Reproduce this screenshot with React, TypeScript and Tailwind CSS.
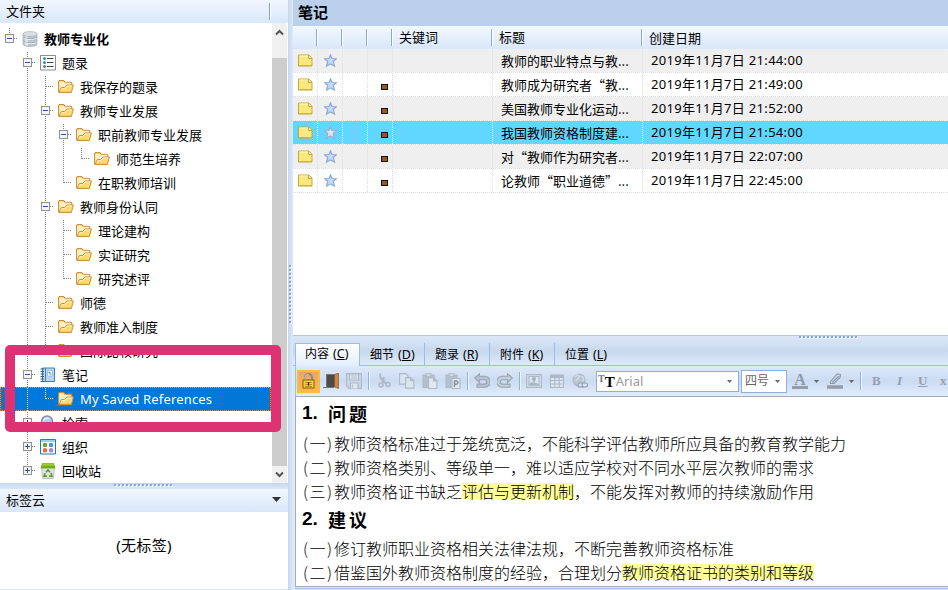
import type { ReactNode } from "react";
import clsx from "clsx";

type IconName = "db" | "list" | "folder" | "notebook" | "search" | "org" | "trash";

// v: vertical line, t: tee, l: last child, - / +: toggle with siblings below,
// r: root toggle, E: collapsed toggle on the last sibling
type Guide = " " | "v" | "t" | "l" | "-" | "+" | "r" | "E";

interface TreeNode {
  guides: string;
  icon: IconName;
  label: string;
  bold?: boolean;
  selected?: boolean;
}

const tree: TreeNode[] = [
  { guides: "r", icon: "db", label: "教师专业化", bold: true },
  { guides: " -", icon: "list", label: "题录" },
  { guides: " vt", icon: "folder", label: "我保存的题录" },
  { guides: " v-", icon: "folder", label: "教师专业发展" },
  { guides: " vv-", icon: "folder", label: "职前教师专业发展" },
  { guides: " vvvl", icon: "folder", label: "师范生培养" },
  { guides: " vvl", icon: "folder", label: "在职教师培训" },
  { guides: " v-", icon: "folder", label: "教师身份认同" },
  { guides: " vvt", icon: "folder", label: "理论建构" },
  { guides: " vvt", icon: "folder", label: "实证研究" },
  { guides: " vvl", icon: "folder", label: "研究述评" },
  { guides: " vt", icon: "folder", label: "师德" },
  { guides: " vt", icon: "folder", label: "教师准入制度" },
  { guides: " vl", icon: "folder", label: "国际比较研究" },
  { guides: " -", icon: "notebook", label: "笔记" },
  { guides: " vl", icon: "folder", label: "My Saved References", selected: true },
  { guides: " +", icon: "search", label: "检索" },
  { guides: " +", icon: "org", label: "组织" },
  { guides: " E", icon: "trash", label: "回收站" },
];

const notes = [
  { title: "教师的职业特点与教...", date: "2019年11月7日 21:44:00", mark: false },
  { title: "教师成为研究者“教...", date: "2019年11月7日 21:49:00", mark: true },
  { title: "美国教师专业化运动...", date: "2019年11月7日 21:52:00", mark: true },
  { title: "我国教师资格制度建...", date: "2019年11月7日 21:54:00", mark: true, selected: true },
  { title: "对“教师作为研究者...", date: "2019年11月7日 22:07:00", mark: true },
  { title: "论教师“职业道德”...", date: "2019年11月7日 22:45:00", mark: true },
];

const tabs = [
  { label: "细节", hotkey: "D" },
  { label: "题录", hotkey: "R" },
  { label: "附件", hotkey: "K" },
  { label: "位置", hotkey: "L" },
];

const GuideCell = ({ kind, selected }: { kind: Guide; selected?: boolean }) => {
  const color = selected ? "#ffffff" : "#808080";
  const box = "-+rE".includes(kind);
  const plus = kind === "+" || kind === "E";
  const down = "vt-+".includes(kind);
  return (
    <svg width="18" height="24" className="shrink-0" shapeRendering="crispEdges">
      {kind !== " " && (
        <path
          d={clsx("M9.5 1V12", down && "M9.5 13V24", kind !== "v" && "M9.5 11.5H18")}
          stroke={color}
          strokeDasharray="1 1"
          fill="none"
        />
      )}
      {box && (
        <>
          <rect x="5.5" y="7.5" width="8" height="8" fill="#f4f4f4" stroke="#919191" />
          <path d={plus ? "M7 11.5H12M9.5 9V14" : "M7 11.5H12"} stroke="#2f4fa5" />
        </>
      )}
    </svg>
  );
};

const TreeIcon = ({ name }: { name: IconName }) => {
  switch (name) {
    case "db":
      return (
        <svg width="16" height="16" viewBox="0 0 16 16" className="shrink-0">
          <path d="M1 3v10.2c0 3 14 3 14 0V3z" fill="#bcc4cc" />
          <path d="M3 4v10.800c1 .3 2 .5 3 .6V5z" fill="#e0e5e9" />
          <path d="M1 6.700c1 2.200 13 2.200 14 0M1 11c1 2.200 13 2.200 14 0" stroke="#eef1f3" fill="none" />
          <path d="M1 5.800c1 2.200 13 2.200 14 0M1 10c1 2.200 13 2.200 14 0" stroke="#a2acb5" strokeWidth=".8" fill="none" />
          <path d="M1 3v10.200c0 3 14 3 14 0V3" stroke="#a3adb6" strokeWidth=".7" fill="none" />
          <ellipse cx="8" cy="3" rx="7" ry="2.500" fill="#d9dfe4" stroke="#a3adb6" strokeWidth=".6" />
        </svg>
      );
    case "list":
      return (
        <svg width="16" height="16" viewBox="0 0 16 16" className="shrink-0">
          <path d="M.5.500h15v14.500h-15z" fill="#fff" stroke="#8d8d8d" />
          <path d="M7 3.500h6.500M7 7.500h6.500M7 11.500h6.500" stroke="#444" />
          <circle cx="4.500" cy="3.500" r="1.500" fill="#2793c8" />
          <circle cx="4.500" cy="7.500" r="1.500" fill="#2793c8" />
          <circle cx="4.500" cy="11.500" r="1.500" fill="#2793c8" />
        </svg>
      );
    case "folder":
      return (
        <svg width="16" height="14" viewBox="0 0 16 14" className="shrink-0">
          <path d="M.6 12V1.500L1.500.600h4.200l1.300 1.600h6l.8.900V6l-1 6.500H1.500z" fill="#fdf0c0" stroke="#cf9138" strokeWidth="1.100" />
          <path d="M1.200 12.300 3.300 7.500h3.200L8.800 5h6.600l-2 7.300z" fill="#fbd977" stroke="#cf9138" strokeWidth="1" />
          <path d="M3 11 4.200 8.500H7L9.200 6h4.900" stroke="#fff3c8" fill="none" />
        </svg>
      );
    case "notebook":
      return (
        <svg width="16" height="16" viewBox="0 0 16 16" className="shrink-0">
          <path d="M2.500 1h12v13.500h-12z" fill="#b9d6ee" stroke="#4480ae" />
          <path d="M5.500 1v13.500" stroke="#4480ae" />
          <path d="M7.500 3.500h5v5.500h-5z" fill="#f4f8fc" stroke="#8eb3d2" strokeWidth=".7" />
          <path d="M8.500 5.500h2M9.500 7h2" stroke="#4480ae" />
          <path d="M.5 2H4M.5 4.500H4M.5 7H4M.5 9.500H4M.5 12H4M.5 14.500H4" stroke="#355f82" />
        </svg>
      );
    case "search":
      return (
        <svg width="16" height="16" viewBox="0 0 16 16" className="shrink-0">
          <circle cx="7" cy="6.500" r="5.500" fill="#a4d0f5" stroke="#8794a5" strokeWidth="1.500" />
          <path d="M3.500 6a4 4 0 0 1 6-2" stroke="#e8f5ff" strokeWidth="1.500" fill="none" />
          <path d="m11 11 4 4" stroke="#8794a5" strokeWidth="2.500" />
        </svg>
      );
    case "org":
      return (
        <svg width="16" height="16" viewBox="0 0 16 16" className="shrink-0">
          <path d="M.5.500h15v14.500h-15z" fill="#f3f9fd" stroke="#207ca6" />
          <path d="M1 2h14" stroke="#7cc4e6" strokeWidth="1.500" />
          <rect x="3" y="4" width="4" height="4" rx="1" fill="#7c9e1f" />
          <rect x="9" y="4" width="4" height="4" rx="1" fill="#4f93d0" />
          <rect x="3" y="9.300" width="4" height="4" rx="1" fill="#e86c3a" />
          <rect x="9" y="9.300" width="4" height="4" rx="1" fill="#a982d8" />
        </svg>
      );
    case "trash":
      return (
        <svg width="16" height="16" viewBox="0 0 16 16" className="shrink-0">
          <path d="M1.500 5h13l-1.200 10.500H2.700z" fill="#dfe1df" stroke="#a5aaa5" strokeWidth=".7" />
          <path d="M2 .3h12l1.500 4.900H.5z" fill="#6dad17" />
          <path d="M2.500.800h11l.7 2H1.800z" fill="#97cc35" />
          <path d="m6 9.300 2-2.500 2 2.500M11 10l1 3.300H9M7 13.300H4l1.200-3" stroke="#4c9a1e" strokeWidth="1.400" fill="none" />
        </svg>
      );
  }
};

const TreeRow = ({ node }: { node: TreeNode }) => (
  <div
    className={clsx(
      "flex h-6 items-center",
      node.selected && "bg-[#0078d7] text-white outline-1 -outline-offset-1 outline-dotted outline-[#ff8728]"
    )}
  >
    {node.guides.split("").map((g, i) => (
      <GuideCell key={i} kind={g as Guide} selected={node.selected} />
    ))}
    <span className="ml-1 mr-1.5 flex">
      <TreeIcon name={node.icon} />
    </span>
    <span
      className={clsx(
        "whitespace-nowrap pt-px",
        node.bold && "font-bold",
        node.selected && "tracking-[0.17px]"
      )}
    >
      {node.label}
    </span>
  </div>
);

// Row of small two-tone grips drawn on the splitters
const Grip = ({ vertical }: { vertical?: boolean }) => (
  <svg width={vertical ? 4 : 60} height={vertical ? 60 : 4} shapeRendering="crispEdges">
    {Array.from({ length: 15 }, (_, i) => (
      <g key={i} transform={vertical ? `translate(0 ${i * 4})` : `translate(${i * 4} 0)`}>
        <rect x="1" y="1" width="2" height="2" fill="#fff" />
        <rect width="2" height="2" fill="#86a8d6" />
      </g>
    ))}
  </svg>
);

const FolderPane = () => (
  <aside className="flex w-[288px] shrink-0 flex-col bg-white">
    <div className="flex h-[23px] shrink-0 items-center justify-between bg-linear-to-b from-[#f1f6fe] to-[#d9e7fa] pl-1.5 pr-[17px]">
      <span className="pt-px">文件夹</span>
      <span className="-mt-px h-[17px] border-l border-r border-l-[#7f9fce] border-r-white" />
    </div>
    <div className="flex h-[460px] shrink-0">
      <div className="w-[271px] pt-1">
        {tree.map((node) => (
          <TreeRow key={node.label} node={node} />
        ))}
      </div>
      <div className="ml-px flex w-[15px] flex-col bg-[#f0f0f0]">
        <div className="flex h-[35px] justify-center pt-1.5">
          <svg width="9" height="7" viewBox="0 0 9 7">
            <path d="M1 5.500 4.500 2 8 5.500" stroke="#555" strokeWidth="2" fill="none" />
          </svg>
        </div>
        <div className="flex-1 bg-[#cdcdcd]" />
        <div className="flex h-[17px] items-center justify-center">
          <svg width="9" height="7" viewBox="0 0 9 7">
            <path d="M1 1.500 4.500 5 8 1.500" stroke="#555" strokeWidth="2" fill="none" />
          </svg>
        </div>
      </div>
    </div>
    <div className="flex h-1.5 shrink-0 justify-center bg-linear-to-b from-[#c5d8ef] to-[#dae7f8] pt-px">
      <Grip />
    </div>
    <div className="flex h-[23px] shrink-0 items-center justify-between bg-linear-to-b from-[#f1f6fe] to-[#d9e7fa] pl-1.5 pr-[7px]">
      <span className="pt-px">标签云</span>
      <svg width="9" height="5" className="-mt-0.5">
        <path d="M0 0h9L4.500 5z" fill="#333" />
      </svg>
    </div>
    <div className="flex flex-1 justify-center border-b border-[#d5e4f7] pt-[22px] text-[15px] tracking-[0.3px]">
      (无标签)
    </div>
  </aside>
);

const NoteIcon = () => (
  <svg width="15" height="13" viewBox="0 0 15 13">
    <path d="M.5 1h10.500l3 3v8H.5z" fill="#fae981" stroke="#c4aa35" />
    <path d="M1.500 2h9" stroke="#fff5b0" />
    <path d="M10.500 1v3.500H14" fill="#fff7c0" stroke="#b59a2c" strokeWidth=".8" />
    <path d="M1 11.500h13" stroke="#c9b343" />
  </svg>
);

const StarIcon = ({ selected }: { selected?: boolean }) => (
  <svg width="13" height="13" viewBox="0 0 13 13">
    <path
      d="m6.500.800 1.500 3.700 4.300.3-3.200 2.700 1.400 4.600-4-2.300-4 2.300 1.400-4.600L.7 4.800 5 4.500z"
      fill={selected ? "#dfe5f3" : "#c4dcf7"}
      stroke={selected ? "#a5a9c4" : "#86a6d6"}
      strokeWidth="1.100"
    />
  </svg>
);

const HeadCell = ({ className, children }: { className: string; children?: ReactNode }) => (
  <div className={clsx("flex h-[23px] shrink-0 items-center", className)}>
    <span className="flex-1 pt-px">{children}</span>
    <span className="h-[17px] border-l border-r border-l-[#8aa9d6] border-r-white" />
  </div>
);

const cell = "flex h-full shrink-0 items-center border-r border-dotted";

const NoteList = () => (
  <section className="flex h-[335px] shrink-0 flex-col bg-white">
    <h2 className="h-[26px] shrink-0 bg-[#bad0eb] pl-[5px] text-[15px] font-bold leading-[25px]">笔记</h2>
    <div className="flex h-[23px] shrink-0 bg-linear-to-b from-[#f3f8ff] to-[#d9e7fa]">
      <HeadCell className="w-[25px]" />
      <HeadCell className="w-[25px]" />
      <HeadCell className="w-[25px]" />
      <HeadCell className="w-[25px]" />
      <HeadCell className="w-[100px] pl-1.5">关键词</HeadCell>
      <HeadCell className="w-[150px] pl-1.5">标题</HeadCell>
      <span className="pl-1.5 pt-px leading-[23px]">创建日期</span>
    </div>
    {notes.map((note, i) => {
      const border = note.selected ? "border-white" : "border-[#dedede]";
      return (
        <div
          key={note.date}
          className={clsx(
            "flex h-6 shrink-0 items-center border-b border-dotted border-[#dedede] bg-clip-padding",
            note.selected ? "bg-[#5fd7ff]" : i % 2 === 0 ? "bg-[#efefef]" : "bg-white"
          )}
        >
          <div className={clsx(cell, border, "w-[25px] pl-[5px]")}>
            <NoteIcon />
          </div>
          <div className={clsx(cell, border, "w-[25px] justify-center")}>
            <StarIcon selected={note.selected} />
          </div>
          <div className={clsx(cell, border, "w-[25px]")} />
          <div className={clsx(cell, border, "w-[25px] justify-end pr-1 pt-[5px]")}>
            {note.mark && <span className="h-1.5 w-[7px] border border-[#10103a] bg-[#9a5a0a]" />}
          </div>
          <div className={clsx(cell, border, "w-[100px]")} />
          <div
            lang="zh-CN"
            className={clsx(cell, border, "w-[150px] whitespace-nowrap pl-2 font-['Noto_Sans_CJK_SC',sans-serif]")}
          >
            {note.title}
          </div>
          <span className="whitespace-nowrap pl-2 pt-px tracking-[0.31px]">{note.date}</span>
        </div>
      );
    })}
  </section>
);

const Hotkey = ({ label, hotkey }: { label: string; hotkey: string }) => (
  <span className="whitespace-nowrap pt-px text-[12px]">
    {label}
    <span className="ml-1 text-[12.5px]">
      (<span className="underline">{hotkey}</span>)
    </span>
  </span>
);

const ToolIcon = ({ className, children }: { className?: string; children: ReactNode }) => (
  <svg
    width="16"
    height="16"
    viewBox="0 0 16 16"
    fill="none"
    stroke="#adb9c8"
    strokeWidth="1.1"
    className={clsx("shrink-0", className)}
  >
    {children}
  </svg>
);

const Separator = ({ className }: { className?: string }) => (
  <span className={clsx("h-[18px] shrink-0 border-l border-r border-l-[#8fb0df] border-r-[#eef5fe]", className)} />
);

const Caret = ({ className }: { className?: string }) => (
  <svg width="5" height="3" className={clsx("shrink-0", className)}>
    <path d="M0 0h5L2.500 3z" fill="#666" />
  </svg>
);

const Toolbar = () => (
  <div className="flex h-[30px] shrink-0 items-center overflow-hidden border-l border-[#9cbdea] bg-linear-to-b from-[#dce9fa] via-[#cbdbf0] to-[#e0edfd] pl-px">
    <span className="flex size-[23px] shrink-0 items-center justify-center border-2 border-[#f5be3c] bg-linear-to-b from-[#e9a36b] to-[#ffb84a]">
      <svg width="13" height="16" viewBox="0 0 13 16">
        <path d="M3 8V4.500a3.500 3.500 0 0 1 7 0V8" stroke="#8f8980" strokeWidth="2" fill="none" />
        <path d="M3 7V4.500a3.500 3.500 0 0 1 3.500-3" stroke="#f3eee6" strokeWidth=".7" fill="none" />
        <rect x="1" y="7" width="11" height="8" fill="#f8cf3c" stroke="#8a5d10" />
        <path d="M3 9.500h7M3 11.500h7M3 13.500h7" stroke="#9d7616" strokeWidth=".7" />
        <path d="M6.500 9v3.500" stroke="#503500" strokeWidth="1.500" />
      </svg>
    </span>
    <svg width="17" height="16" viewBox="0 0 17 16" className="ml-[3px] shrink-0">
      <path d="M3 1h9v13H3z" fill="#4b4b4b" />
      <path d="M3 1.500h9M3.500 1v13" stroke="#777" />
      <path d="M0 14.500h11" stroke="#6d7580" />
      <path d="M11.500 1.500 15.500 0v15.500l-4-1.500z" fill="#c78746" stroke="#8a5620" strokeWidth=".7" />
    </svg>
    <ToolIcon className="ml-[6px]">
      <path d="M.6.600h14.800v14.800H3L.6 13z" fill="#cbd6e3" />
      <path d="M3.500 1v6h9V1z" fill="#dfe8f2" />
      <path d="M4.500 15.400V10h7.500v5.400" fill="#dfe8f2" />
      <path d="M5 3h6M5 5h6M6.500 11.500v3" />
    </ToolIcon>
    <Separator className="ml-[6px]" />
    <ToolIcon className="ml-[6px]">
      <path d="M4 .500 4.500 5l6 6M8 4 6.500 10" strokeWidth="2" />
      <circle cx="5" cy="12" r="2" strokeWidth="1.500" />
      <circle cx="12" cy="11.500" r="2" strokeWidth="1.500" />
    </ToolIcon>
    <ToolIcon className="ml-[7px]">
      <path d="M.6.600h6l2.500 2.500v8H.6z" fill="#dbe5f1" />
      <path d="M6.600 4.600h5l3.300 3v7.500H6.600zM11.500 4.600v3h3.400" fill="#dbe5f1" />
    </ToolIcon>
    <ToolIcon className="ml-[7px]">
      <path d="M1 2h11v12.500H1z" fill="#b4c0ce" />
      <path d="M4 .8h5v2.500H4z" fill="#dce5ef" />
      <path d="M6.600 5h5l3.300 2.500v8H6.600zM11.500 5v3h3.400" fill="#e1eaf4" />
    </ToolIcon>
    <ToolIcon className="ml-[7px]">
      <path d="M1 2h11v12.500H1z" fill="#b4c0ce" />
      <path d="M4 .8h5v2.500H4z" fill="#dce5ef" />
      <path d="M7 5.500h8v10H7z" fill="#e1eaf4" />
      <path d="M9.500 14V8h1.800a1.500 1.500 0 0 1 0 3.200H9.500" stroke="#8491a3" strokeWidth="1.400" />
    </ToolIcon>
    <Separator className="ml-[6px]" />
    <ToolIcon className="ml-[5px]">
      <path d="M.7 5 5.500.800v2.500h5.300a4.800 4.800 0 0 1 0 11H3v-3.200h7.500a1.900 1.900 0 0 0 0-4.300h-5v2.700z" fill="#b7c3d0" stroke="#96a3b3" />
    </ToolIcon>
    <ToolIcon className="ml-[7px]">
      <path d="M15.300 5 10.500.800v2.500H5.200a4.800 4.800 0 0 0 0 11H13v-3.200H5.500a1.900 1.900 0 0 1 0-4.300h5v2.700z" fill="#c3cedb" stroke="#96a3b3" />
    </ToolIcon>
    <Separator className="ml-[6px]" />
    <ToolIcon className="ml-[5px]">
      <path d="M.6 1.600h14.800v12.800H.6z" fill="#d5dfec" />
      <path d="M3 3.500h10v8.500H3z" fill="#dde7f2" />
      <path d="M3 12c1.500-2.500 2.500-2.500 4-2s3.500-.5 6 2z" fill="#a9b6c5" />
      <path d="M8 10V6" strokeWidth="1.500" />
      <circle cx="8" cy="6" r="2" fill="#a3b0bf" stroke="none" />
    </ToolIcon>
    <ToolIcon className="ml-[7px]">
      <path d="M1.500 2h13v12.500h-13z" fill="#dde7f3" />
      <path d="M1.500 3.500h13" strokeWidth="3" />
      <path d="M1.500 7.500h13M1.500 11h13M5.800 3v11.500M10.200 3v11.500" />
    </ToolIcon>
    <ToolIcon className="ml-[7px]">
      <circle cx="7" cy="7" r="6" fill="#b9c5d3" />
      <path d="M3 4c2-3 4-2 4 0s-3 2-3 4M9 3c3 1 3 3 2 5" stroke="#d3dde9" strokeWidth="1.500" />
      <rect x="6" y="10" width="5.500" height="4" rx="2" fill="#dbe5f1" stroke="#8f9cad" />
      <rect x="10" y="10" width="5.500" height="4" rx="2" fill="#dbe5f1" stroke="#8f9cad" />
    </ToolIcon>
    <div className="ml-2 flex h-[21px] w-[143px] shrink-0 items-center border border-[#8fb0df] bg-white pl-px pr-1.5 text-[13px] text-[#9a9a9a]">
      <span className="-mt-1 font-['Liberation_Serif',serif] text-[10px] font-bold leading-none text-[#777]">T</span>
      <span className="mt-0.5 font-['Liberation_Serif',serif] text-[15px] font-bold leading-none text-black">T</span>
      <span className="flex-1 pl-px pt-px">Arial</span>
      <Caret />
    </div>
    <div className="ml-[2px] flex h-[23px] w-[46px] shrink-0 items-center border border-[#8fb0df] bg-white pl-[3px] pr-1.5 text-[12px] text-[#666]">
      <span className="flex-1">四号</span>
      <Caret />
    </div>
    <div className="ml-[5px] flex w-4 shrink-0 flex-col items-center">
      <span className="font-['Liberation_Serif',serif] text-[16px] font-bold leading-[13px] text-[#8b98aa]">A</span>
      <span className="h-[3px] w-4 bg-[#939cab]" />
    </div>
    <Caret className="ml-1.5" />
    <ToolIcon className="ml-[8px]">
      <path d="m3.500 8.500 6.500-7.500 3.500.500-.5 3L7 10.500H3.500zM5 9.500 12 3" stroke="#8b98aa" />
      <path d="M0 14h16" stroke="#939cab" strokeWidth="3.500" />
    </ToolIcon>
    <Caret className="ml-1.5" />
    <Separator className="ml-[6px]" />
    <div className="ml-[10px] flex shrink-0 font-['Liberation_Serif',serif] text-[13px] font-bold text-[#94a1b2]">
      <span className="w-[23px]">B</span>
      <span className="w-[23px] pl-0.5 italic">I</span>
      <span className="w-[22px] underline">U</span>
      <span>x</span>
    </div>
  </div>
);

const Heading = ({ no, children }: { no: string; children: ReactNode }) => (
  <h3 className="flex font-['Liberation_Sans',sans-serif] text-[19px] font-bold">
    <span className="w-[26px]">{no}</span>
    <span className="font-['Noto_Sans_CJK_SC',sans-serif] text-[18px] tracking-[3px]">{children}</span>
  </h3>
);

const Line = ({ no, children }: { no: string; children: ReactNode }) => (
  <p className="flex h-6 items-center whitespace-nowrap">
    <span className="w-8 pl-px tracking-[1.5px]">({no})</span>
    <span>{children}</span>
  </p>
);

const Mark = ({ children }: { children: ReactNode }) => (
  <mark className="inline-block h-4 bg-[#ffff99] leading-4 text-black">{children}</mark>
);

const NoteEditor = () => (
  <section className="flex flex-1 flex-col bg-[#dce9f9] pl-0.5">
    <div className="-ml-0.5 flex h-[31px] shrink-0 flex-col border-t border-[#b4c9e4] bg-linear-to-b from-[#dbe7f7] via-[#c8d9ed] to-[#dfebfb]">
      <div className="flex h-[7px] shrink-0 justify-end pr-[89px]">
        <Grip />
      </div>
      <div className="flex flex-1 border-b border-[#9cbdea] pl-0.5">
        <div className="-mb-px flex w-[65px] border border-b-0 border-[#9cbdea] bg-linear-to-b from-white to-[#e3eefc] pl-[9px]">
          <Hotkey label="内容" hotkey="C" />
        </div>
        {tabs.map((tab, i) => (
          <div
            key={tab.hotkey}
            className={clsx("flex w-[65px] pl-2.5 pt-0.5", i < 3 && "border-r border-[#9cbdea]")}
          >
            <Hotkey label={tab.label} hotkey={tab.hotkey} />
          </div>
        ))}
      </div>
    </div>
    <Toolbar />
    <article className="h-[191px] shrink-0 overflow-hidden border border-r-0 border-[#a5acb5] bg-white pl-1.5 pt-1 font-['Noto_Sans_CJK_SC',sans-serif] text-[16px] font-light leading-6 text-black">
      <Heading no="1.">问题</Heading>
      <div className="mt-[6px]">
        <Line no="一">教师资格标准过于笼统宽泛，不能科学评估教师所应具备的教育教学能力</Line>
        <Line no="二">教师资格类别、等级单一，难以适应学校对不同水平层次教师的需求</Line>
        <Line no="三">
          教师资格证书缺乏<Mark>评估与更新机制</Mark>，不能发挥对教师的持续激励作用
        </Line>
      </div>
      <div className="mt-1">
        <Heading no="2.">建议</Heading>
      </div>
      <div className="mt-[5px]">
        <Line no="一">修订教师职业资格相关法律法规，不断完善教师资格标准</Line>
        <Line no="二">
          借鉴国外教师资格制度的经验，合理划分<Mark>教师资格证书的类别和等级</Mark>
        </Line>
      </div>
    </article>
    <div className="mt-px border-t border-[#9cbdea]" />
  </section>
);

const App = () => (
  <div className="relative flex h-[590px] w-[948px] overflow-hidden bg-white font-['Noto_Sans','Noto_Sans_CJK_SC',sans-serif] text-[13px] text-black">
    <FolderPane />
    <div className="flex w-[5px] shrink-0 items-center bg-linear-to-r from-[#c5d8f0] to-[#dde9fa] pl-px">
      <Grip vertical />
    </div>
    <main className="flex w-[655px] flex-col">
      <NoteList />
      <NoteEditor />
    </main>

    {/* highlight frame over the notes folder */}
    <div className="absolute left-[5px] top-[345px] h-[87px] w-[276px] rounded-[5px] border-[10.5px] border-[#dd3274]" />
  </div>
);

export default App;
